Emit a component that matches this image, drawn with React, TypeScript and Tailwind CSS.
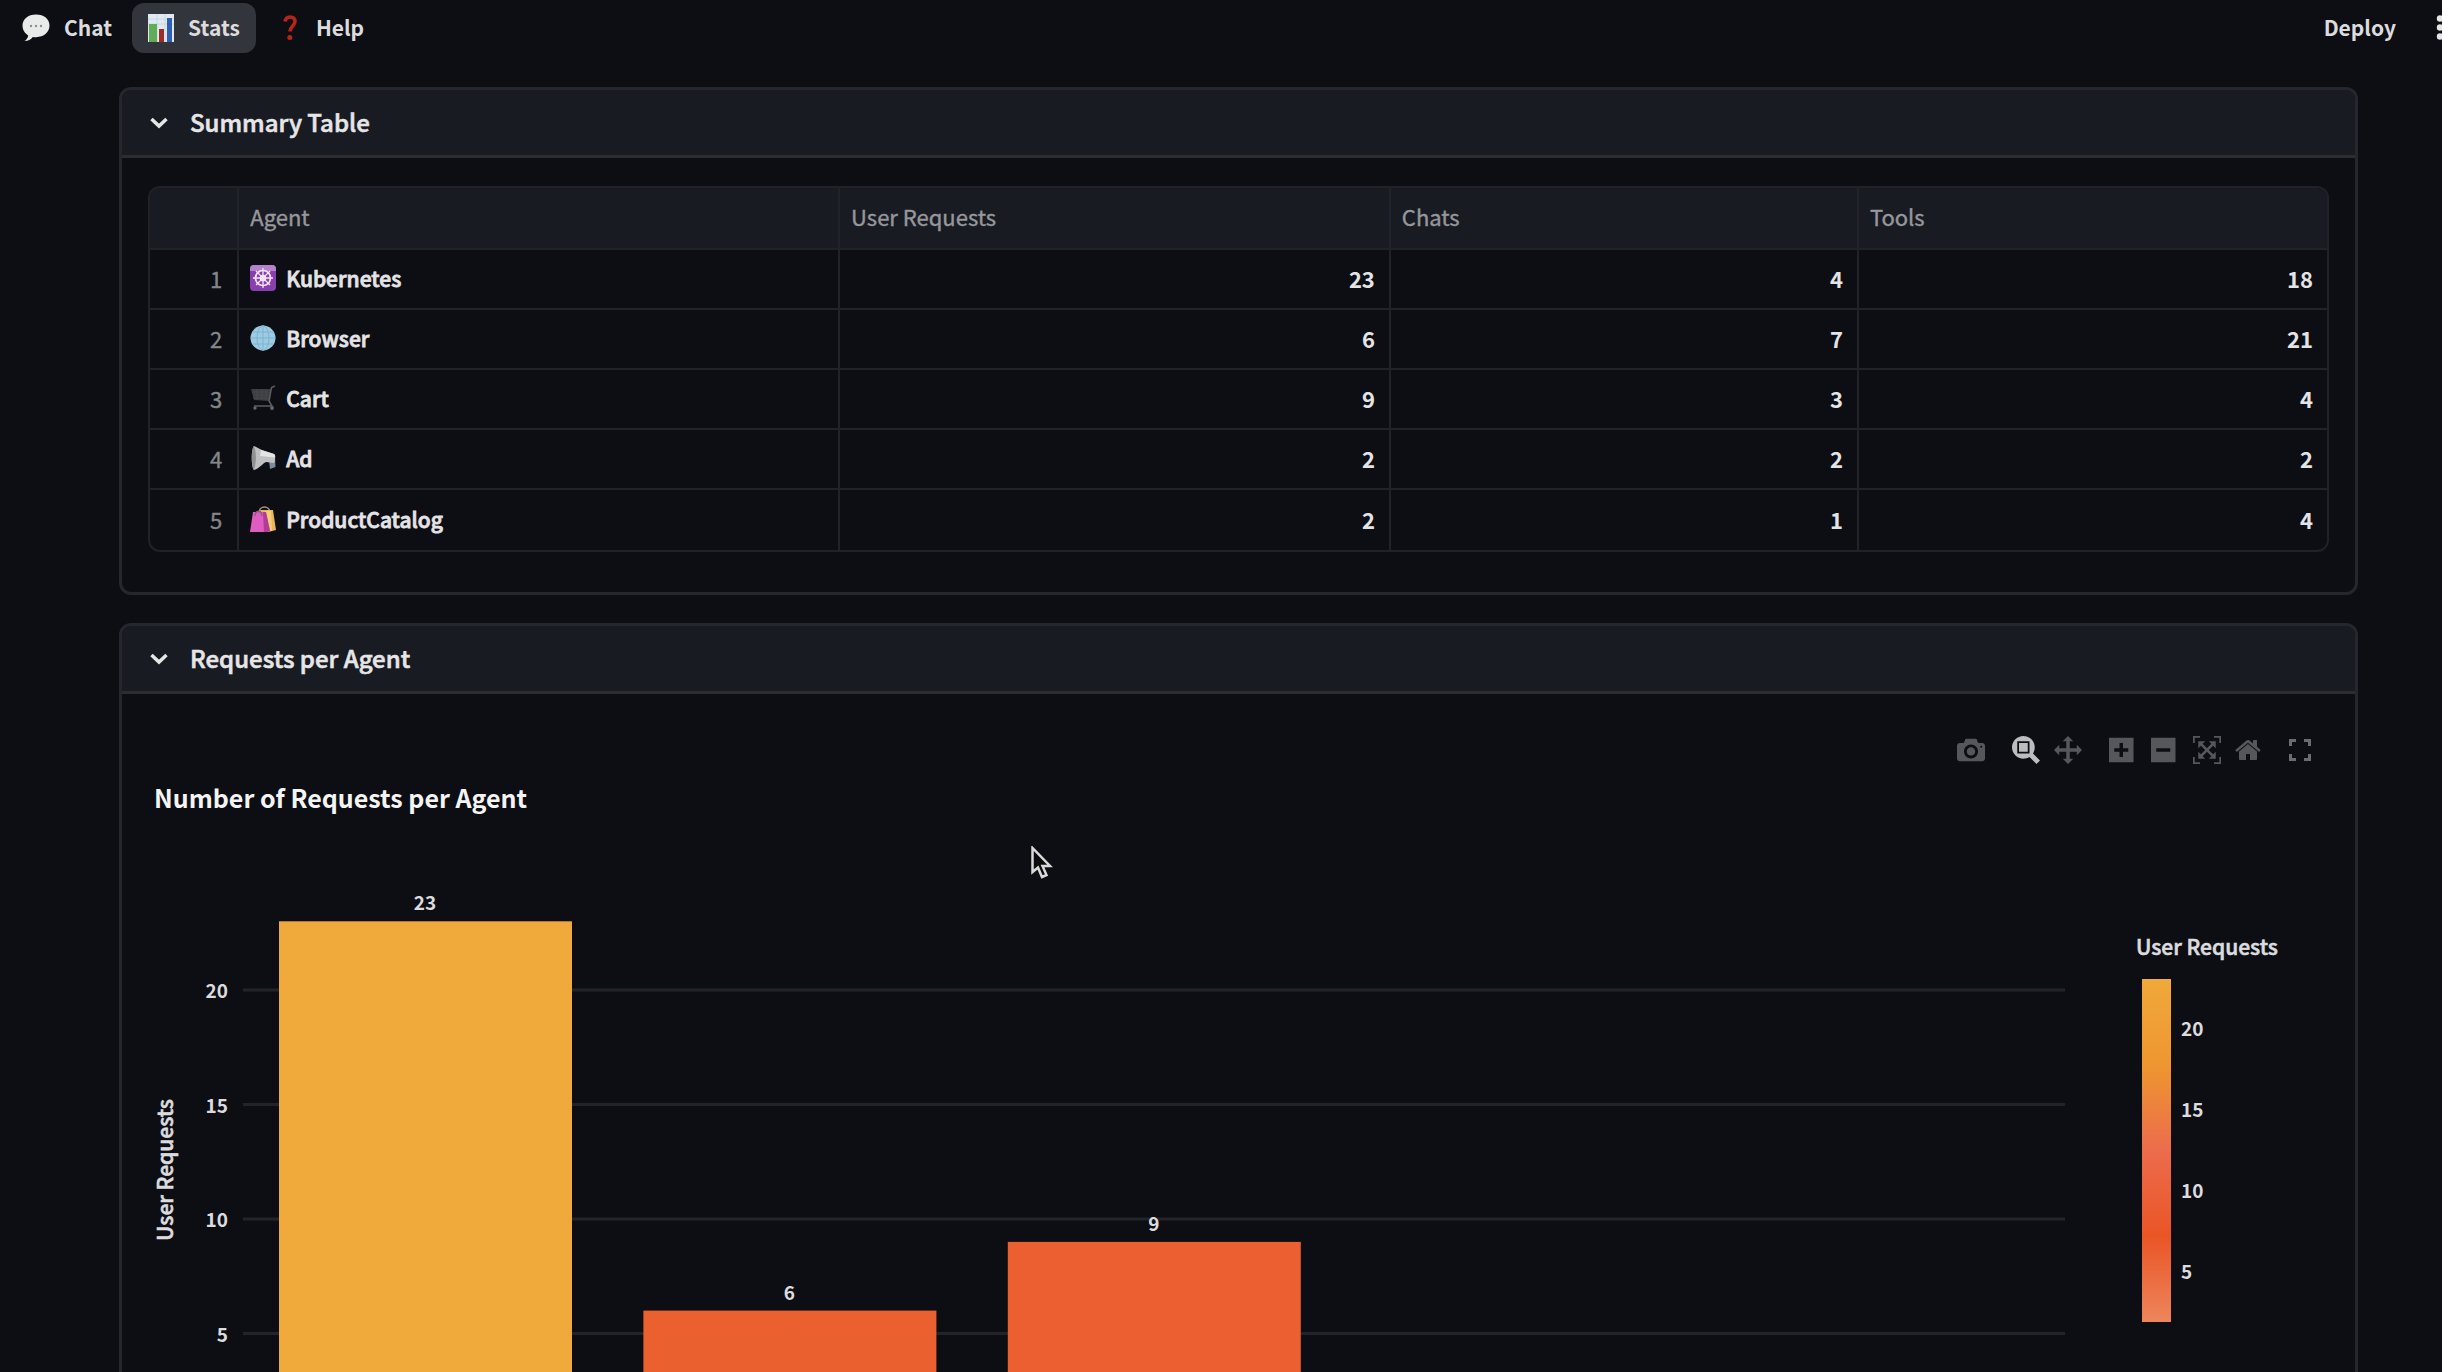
import type { ReactNode } from "react";

const agents = [
  { name: "Kubernetes", icon: <WheelIcon />, requests: 23, chats: 4, tools: 18 },
  { name: "Browser", icon: <GlobeIcon />, requests: 6, chats: 7, tools: 21 },
  { name: "Cart", icon: <CartIcon />, requests: 9, chats: 3, tools: 4 },
  { name: "Ad", icon: <MegaphoneIcon />, requests: 2, chats: 2, tools: 2 },
  { name: "ProductCatalog", icon: <BagsIcon />, requests: 2, chats: 1, tools: 4 },
];

function ChatIcon() {
  return (
    <svg viewBox="0 0 28 28" className="size-7" aria-hidden="true">
      <path d="M14 0.500C6 0.500 0.500 5.200 0.500 11.600c0 4.300 2.300 7.800 5.700 9.800-.3 2.400-1.600 4-3.700 5.600 3.700 0 6.500-1.700 8.300-4.100 1 .2 2.100.3 3.200.3 8 0 13.500-5 13.500-11.600S22 .5 14 .5z" fill="#e9ebea" />
      <g fill="#8b8f90">
        <circle cx="9" cy="12" r="1.200" />
        <circle cx="14" cy="12" r="1.200" />
        <circle cx="19" cy="12" r="1.200" />
      </g>
    </svg>
  );
}

function StatsIcon() {
  return (
    <svg viewBox="0 0 26 28" className="h-7 w-[26px]" aria-hidden="true">
      <rect width="26" height="28" fill="#dfe9f1" />
      <path d="M0 5h26M0 10h26M9 0v28M17 0v28" stroke="#c3d3df" strokeWidth="0.800" />
      <rect x="1" y="10" width="8" height="18" fill="#5fae57" />
      <rect x="11" y="15" width="5" height="13" fill="#9c2b2b" />
      <rect x="19" y="4" width="5" height="24" fill="#2f5fb4" />
    </svg>
  );
}

function HelpIcon() {
  return (
    <svg viewBox="-7 0 26 26" className="size-[26px]" aria-hidden="true">
      <path d="M2 6.500C2.500 3.400 4.500 2 7 2c3 0 5 1.700 5 4.500 0 4.200-5 5-5 10" fill="none" stroke="#b8231c" strokeWidth="3.600" />
      <circle cx="6.800" cy="22.500" r="2.500" fill="#b8231c" />
    </svg>
  );
}

function WheelIcon() {
  return (
    <svg viewBox="0 0 26 26" className="size-[26px]" aria-hidden="true">
      <rect width="26" height="26" rx="4" fill="#8a3fae" />
      <path d="M4 0h18a4 4 0 0 1 4 4v2H0V4a4 4 0 0 1 4-4z" fill="#b583cb" />
      <g fill="none" stroke="#f2e6f8" strokeWidth="1.700">
        <circle cx="13" cy="13" r="7.500" />
        <circle cx="13" cy="13" r="2.500" />
        <path d="M13 3v20M3 13h20M6 6l14 14M20 6L6 20" strokeWidth="1.300" />
      </g>
    </svg>
  );
}

function GlobeIcon() {
  return (
    <svg viewBox="0 0 26 26" className="size-[26px]" aria-hidden="true">
      <circle cx="13" cy="13" r="12.500" fill="#9ccbe2" />
      <g fill="none" stroke="#7db4d1" strokeWidth="1">
        <ellipse cx="13" cy="13" rx="6" ry="12.300" />
        <path d="M13 .5v25M.5 13h25M2.500 7h21M2.500 19h21" />
      </g>
    </svg>
  );
}

function CartIcon() {
  return (
    <svg viewBox="0 0 26 26" className="size-[26px]" aria-hidden="true">
      <path d="M1 4h20l-2 12-15-1z" fill="#3b3d41" />
      <path d="M25 1l-3.500 1.500L19 16l3 5H4" fill="none" stroke="#5a5c60" strokeWidth="1.500" />
      <path d="M2 7h18M3 10h17M3 13h16M7 4v11M12 4v11M16 4v11" stroke="#4b4d51" strokeWidth="0.700" />
      <circle cx="5" cy="23" r="1.700" fill="#66686c" />
      <circle cx="22" cy="23" r="1.900" fill="#66686c" />
    </svg>
  );
}

function MegaphoneIcon() {
  return (
    <svg viewBox="0 0 26 26" className="size-[26px]" aria-hidden="true">
      <path d="M19 15l6-2 .5 9-5.500 2z" fill="#7d8c9c" />
      <path d="M4 1c3 1 5 3 8 4l12 4c1.500 1 1.500 7 0 9l-8-1c-4 2-6 6-12 8-3-3-3-21 0-24z" fill="#bfc0c1" />
      <path d="M4 1c2 5 3 15 0 24-3-3-3-21 0-24z" fill="#8f9193" />
      <path d="M11 5l13 4c1 .6 1.300 2 1.200 3.500L10 11z" fill="#e3e4e4" />
    </svg>
  );
}

function BagsIcon() {
  return (
    <svg viewBox="0 0 26 26" className="size-[26px]" aria-hidden="true">
      <path d="M9 7c0-8 11-8 11 0" fill="none" stroke="#a98e7c" strokeWidth="1.600" />
      <path d="M10 4h13l3 20-8 2z" fill="#eab758" />
      <path d="M15 5h6l1 20h-5z" fill="#f3cf7a" />
      <path d="M3 6h13l4 19-3 1H0z" fill="#df5cc0" />
      <path d="M13 6h3l4 19-3 1h-3z" fill="#b13b95" />
      <path d="M5 10c0-6 7-6 7 0" fill="none" stroke="#8d5a86" strokeWidth="1.300" />
    </svg>
  );
}

function NavButton({ icon, label, active }: { icon: ReactNode; label: string; active?: boolean }) {
  return (
    <button
      type="button"
      aria-current={active ? "page" : undefined}
      className={
        active
          ? "flex h-[50px] items-center gap-3.5 rounded-xl bg-[#33353c] px-4"
          : "flex h-[50px] items-center gap-3.5 rounded-xl px-4"
      }
    >
      {icon}
      <span className="pb-0.5 text-[21px] leading-8 font-bold text-[#dcdcde]">{label}</span>
    </button>
  );
}

function Panel({ title, children }: { title: string; children: ReactNode }) {
  return (
    <section className="overflow-hidden rounded-xl border-3 border-[#25272c]">
      <button
        type="button"
        aria-expanded="true"
        className="flex h-[68px] w-full items-center gap-[22px] border-b-3 border-[#2b2d32] bg-[#191b23] px-7 text-left"
      >
        <svg viewBox="0 0 18 12" className="h-3 w-[18px]" aria-hidden="true">
          <path d="M1.500 2L9 9l7.500-7" fill="none" stroke="#e6e6e7" strokeWidth="3.500" />
        </svg>
        <span className="pb-0.5 text-2xl leading-8 font-medium text-[#e6e6e7] [-webkit-text-stroke:0.6px]">{title}</span>
      </button>
      {children}
    </section>
  );
}

function SummaryTable() {
  const head =
    "h-[62px] border-b-2 border-[#212328] px-[11px] pb-1 text-left text-[22px] leading-8 font-normal text-[#96979b] [-webkit-text-stroke:0.4px]";
  const num = "border-[#212328] pr-3.5 pb-[3px] text-right font-bold";
  return (
    <div className="mx-[26px] mt-7 mb-10 overflow-hidden rounded-xl border-2 border-[#202227]">
      <table className="w-full table-fixed border-separate border-spacing-0 text-[22px] leading-8 text-[#e4e4e6]">
        <colgroup>
          <col className="w-[4.100%]" />
          <col className="w-[27.600%]" />
          <col className="w-[25.300%]" />
          <col className="w-[21.500%]" />
          <col />
        </colgroup>
        <thead className="bg-[#191b23]">
          <tr>
            <th className={head + " border-r-2"} aria-label="Row" />
            <th className={head + " border-r-2"}>Agent</th>
            <th className={head + " border-r-2"}>User Requests</th>
            <th className={head + " border-r-2"}>Chats</th>
            <th className={head}>Tools</th>
          </tr>
        </thead>
        <tbody className="[&>tr:not(:last-child)>td]:border-b-2">
          {agents.map((a, i) => (
            <tr key={a.name} className="h-[60px]">
              <td className="border-r-2 border-[#212328] pr-[15px] pb-[3px] text-right text-[#85868a] [-webkit-text-stroke:0.4px]">{i + 1}</td>
              <td className="border-r-2 border-[#212328] px-[11px] pb-0.5 text-[21px] font-medium [-webkit-text-stroke:0.8px]">
                <span className="flex items-center gap-2.5">
                  {a.icon}
                  {a.name}
                </span>
              </td>
              <td className={num + " border-r-2"}>{a.requests}</td>
              <td className={num + " border-r-2"}>{a.chats}</td>
              <td className={num}>{a.tools}</td>
            </tr>
          ))}
        </tbody>
      </table>
    </div>
  );
}

const toolIcons = {
  camera:
    "m500 450c-83 0-150-67-150-150 0-83 67-150 150-150 83 0 150 67 150 150 0 83-67 150-150 150z m400 150h-120c-16 0-34 13-39 29l-31 93c-6 15-23 28-40 28h-340c-16 0-34-13-39-28l-31-94c-6-15-23-28-40-28h-120c-55 0-100-45-100-100v-450c0-55 45-100 100-100h800c55 0 100 45 100 100v450c0 55-45 100-100 100z m-400-550c-138 0-250 112-250 250 0 138 112 250 250 250 138 0 250-112 250-250 0-138-112-250-250-250z m365 380c-19 0-35 16-35 35 0 19 16 35 35 35 19 0 35-16 35-35 0-19-16-35-35-35z",
  zoom: "m1000-25l-250 251c40 63 63 138 63 218 0 224-182 406-407 406-224 0-406-182-406-406s183-406 407-406c80 0 155 22 218 62l250-250 125 125z m-812 250l0 438 437 0 0-438-437 0z m62 375l313 0 0-312-313 0 0 312z",
  pan: "m1000 350l-187 188 0-125-250 0 0 250 125 0-188 187-187-187 125 0 0-250-250 0 0 125-188-188 186-187 0 125 252 0 0-250-125 0 187-188 188 188-125 0 0 250 250 0 0-126 187 188z",
  plus: "m1 787l0-875 875 0 0 875-875 0z m687-500l-187 0 0-187-125 0 0 187-188 0 0 125 188 0 0 187 125 0 0-187 187 0 0-125z",
  minus: "m0 788l0-876 875 0 0 876-875 0z m688-500l-500 0 0 125 500 0 0-125z",
  autoscale:
    "m250 850l-187 0-63 0 0-62 0-188 63 0 0 188 187 0 0 62z m688 0l-188 0 0-62 188 0 0-188 62 0 0 188 0 62-62 0z m-875-938l0 188-63 0 0-188 0-62 63 0 187 0 0 62-187 0z m875 188l0-188-188 0 0-62 188 0 62 0 0 62 0 188-62 0z m-125 188l-1 0-93-94-156 156 156 156 92-93 2 0 0 250-250 0 0-2 93-92-156-156-156 156 94 92 0 2-250 0 0-250 0 0 93 93 157-156-157-156-93 94 0 0 0-250 250 0 0 0-94 93 156 157 156-157-93-93 0 0 250 0 0 250z",
  home: "m786 296v-267q0-15-11-26t-25-10h-214v214h-143v-214h-214q-15 0-25 10t-11 26v267q0 1 0 2t0 2l321 264 321-264q1-1 1-4z m124 39l-34-41q-5-5-12-6h-2q-7 0-12 3l-386 322-386-322q-7-4-13-4-7 2-12 7l-35 41q-4 5-3 13t6 12l401 334q18 15 42 15t43-15l136-114v109q0 8 5 13t13 5h107q8 0 13-5t5-13v-227l122-102q5-5 6-12t-4-13z",
};

function Tool({ label, icon, active }: { label: string; icon: keyof typeof toolIcons; active?: boolean }) {
  return (
    <button type="button" aria-label={label} className={active ? "text-[#bcbdbf]" : "text-[#56575b]"}>
      <svg viewBox="0 0 1000 1000" className="size-7" fill="currentColor" aria-hidden="true">
        <path d={toolIcons[icon]} transform="matrix(1 0 0 -1 0 850)" />
      </svg>
    </button>
  );
}

const ticks = [20, 15, 10, 5];
const slot = 364.4;
const zeroY = 619;
const unit = 22.9;
const viewHeight = 560;
const barColors = ["#f0a93b", "#ea602e", "#eb5f30"];

function RequestsChart() {
  return (
    <svg
      viewBox={`0 0 2181 ${viewHeight}`}
      className="block h-auto w-full"
      role="img"
      aria-label="Number of requests per agent"
      fontSize="19"
      fontWeight="700"
      fill="#dcdcdf"
    >
      <defs>
        <linearGradient id="requests-scale" x1="0" y1="0" x2="0" y2="1">
          <stop offset="0" stopColor="#f0a93b" />
          <stop offset="0.250" stopColor="#ee9630" />
          <stop offset="0.500" stopColor="#ec6c4c" />
          <stop offset="0.750" stopColor="#ea5526" />
          <stop offset="1" stopColor="#ee855b" />
        </linearGradient>
      </defs>
      {ticks.map((t) => (
        <g key={t}>
          <line x1="95" x2="1917" y1={zeroY - t * unit} y2={zeroY - t * unit} stroke="#212429" strokeWidth="3" />
          <text x="80" y={zeroY - t * unit + 8} textAnchor="end">
            {t}
          </text>
        </g>
      ))}
      {agents.map((a, i) => {
        const x = 131 + i * slot;
        const top = zeroY - a.requests * unit;
        if (top > viewHeight) return null;
        return (
          <g key={a.name}>
            <rect x={x} y={top} width="293" height={zeroY - top} fill={barColors[i]} />
            <text x={x + 146} y={top - 11} textAnchor="middle">
              {a.requests}
            </text>
          </g>
        );
      })}
      <text transform="translate(25 341) rotate(-90)" textAnchor="middle" fontSize="21" fontWeight="500" stroke="#dcdcdf" strokeWidth="0.600">
        User Requests
      </text>
      <text x="1988" y="126" fontSize="21" fontWeight="500" stroke="#dcdcdf" strokeWidth="0.600">
        User Requests
      </text>
      <rect x="1994" y="150" width="29" height="343" fill="url(#requests-scale)" />
      {ticks.map((t, i) => (
        <text key={t} x="2033" y={207 + i * 81}>
          {t}
        </text>
      ))}
    </svg>
  );
}

export default function App() {
  return (
    <div className="relative h-screen overflow-hidden bg-[#0d0e13] font-['Noto_Sans_CJK_SC',sans-serif] text-[#e4e4e6]">
      <header className="flex items-center justify-between pt-[3px]">
        <nav className="flex items-center gap-1 pl-1.5">
          <NavButton icon={<ChatIcon />} label="Chat" />
          <NavButton icon={<StatsIcon />} label="Stats" active />
          <NavButton icon={<HelpIcon />} label="Help" />
        </nav>
        <div className="flex items-center gap-10">
          <button type="button" className="pb-0.5 text-[21px] leading-8 font-bold text-[#dcdcde]">
            Deploy
          </button>
          <button type="button" aria-label="Menu">
            <svg viewBox="0 0 6 26" className="h-[26px] w-1.5" fill="#e6e6e7" aria-hidden="true">
              <circle cx="4" cy="3.500" r="3.200" />
              <circle cx="4" cy="12.500" r="3.200" />
              <circle cx="4" cy="21.500" r="3.200" />
            </svg>
          </button>
        </div>
      </header>

      <main className="mt-[34px] flex flex-col gap-7 pr-[84px] pl-[119px]">
        <Panel title="Summary Table">
          <SummaryTable />
        </Panel>
        <Panel title="Requests per Agent">
          <div className="mx-[26px] pt-[42px] pb-10">
            <div className="flex justify-end pr-[18px]" role="toolbar" aria-label="Chart tools">
              <div className="mr-[27px] flex">
                <Tool label="Download plot" icon="camera" />
              </div>
              <div className="mr-[27px] flex gap-3.5">
                <Tool label="Zoom" icon="zoom" active />
                <Tool label="Pan" icon="pan" />
              </div>
              <div className="mr-[26px] flex gap-3.5">
                <Tool label="Zoom in" icon="plus" />
                <Tool label="Zoom out" icon="minus" />
                <Tool label="Autoscale" icon="autoscale" />
                <Tool label="Reset axes" icon="home" />
              </div>
              <button type="button" aria-label="Fullscreen">
                <svg viewBox="0 0 22 22" className="size-[22px]" fill="none" stroke="#6b6c70" strokeWidth="3" aria-hidden="true">
                  <path d="M1.500 7V1.500H7M15 1.500h5.500V7M20.500 15v5.500H15M7 20.500H1.500V15" />
                </svg>
              </button>
            </div>
            <h2 className="mt-[15px] mb-3.5 pl-1.5 text-[25px] leading-9 font-bold text-[#f4f4f5]">Number of Requests per Agent</h2>
            <RequestsChart />
          </div>
        </Panel>
      </main>

      <svg viewBox="0 0 22 34" className="pointer-events-none absolute top-[846px] left-[1031px] h-[34px] w-[22px]" aria-hidden="true">
        <path d="M1.500 2v24l5.500-4.500 4 9.500 4.500-2-4-9h7.500z" fill="#0b0b0d" stroke="#d9d9da" strokeWidth="2.500" />
      </svg>
    </div>
  );
}
